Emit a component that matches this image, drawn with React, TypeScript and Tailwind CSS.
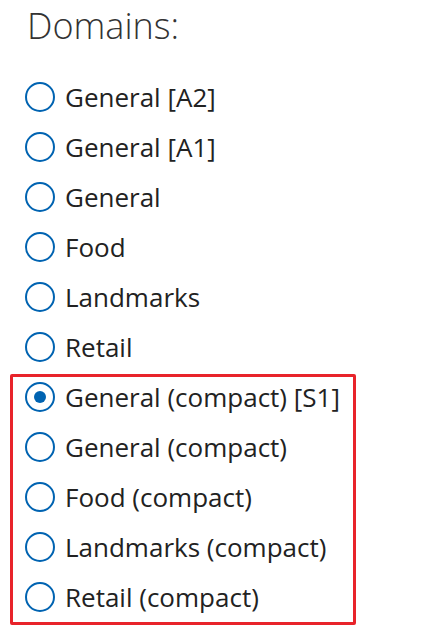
import React from "react";

const top = ["General [A2]", "General [A1]", "General", "Food", "Landmarks", "Retail"];
const compact = [
  "General (compact) [S1]",
  "General (compact)",
  "Food (compact)",
  "Landmarks (compact)",
  "Retail (compact)",
];

function Radio({ label, checked }: { label: string; checked?: boolean }) {
  return (
    <div className="flex h-[50px] items-center">
      <span className="flex h-[30px] w-[30px] shrink-0 items-center justify-center rounded-full border-2 border-[#0063b1]">
        {checked && <span className="h-[12px] w-[12px] rounded-full bg-[#0063b1]" />}
      </span>
      <span className="ml-[10px] text-[26px] leading-none text-[#222222]">{label}</span>
    </div>
  );
}

export default function App() {
  return (
    <div
      className="h-[638px] w-[440px] bg-white"
      style={{ fontFamily: '"Open Sans", "Noto Sans", sans-serif' }}
    >
      <div className="pl-[27px] pt-[4px] text-[36px] font-light leading-[44px] text-[#333333]">Domains:</div>
      <div className="mt-[24px] flex flex-col pl-[25px]">
        {top.map((l) => (
          <Radio key={l} label={l} />
        ))}
      </div>
      <div className="ml-[10px] mt-[2px] w-[346px] rounded-[2px] border-[3px] border-[#e8232a] pl-[12px]">
        <div className="-mt-[5px] flex flex-col">
          {compact.map((l, i) => (
            <Radio key={l} label={l} checked={i === 0} />
          ))}
        </div>
      </div>
    </div>
  );
}
